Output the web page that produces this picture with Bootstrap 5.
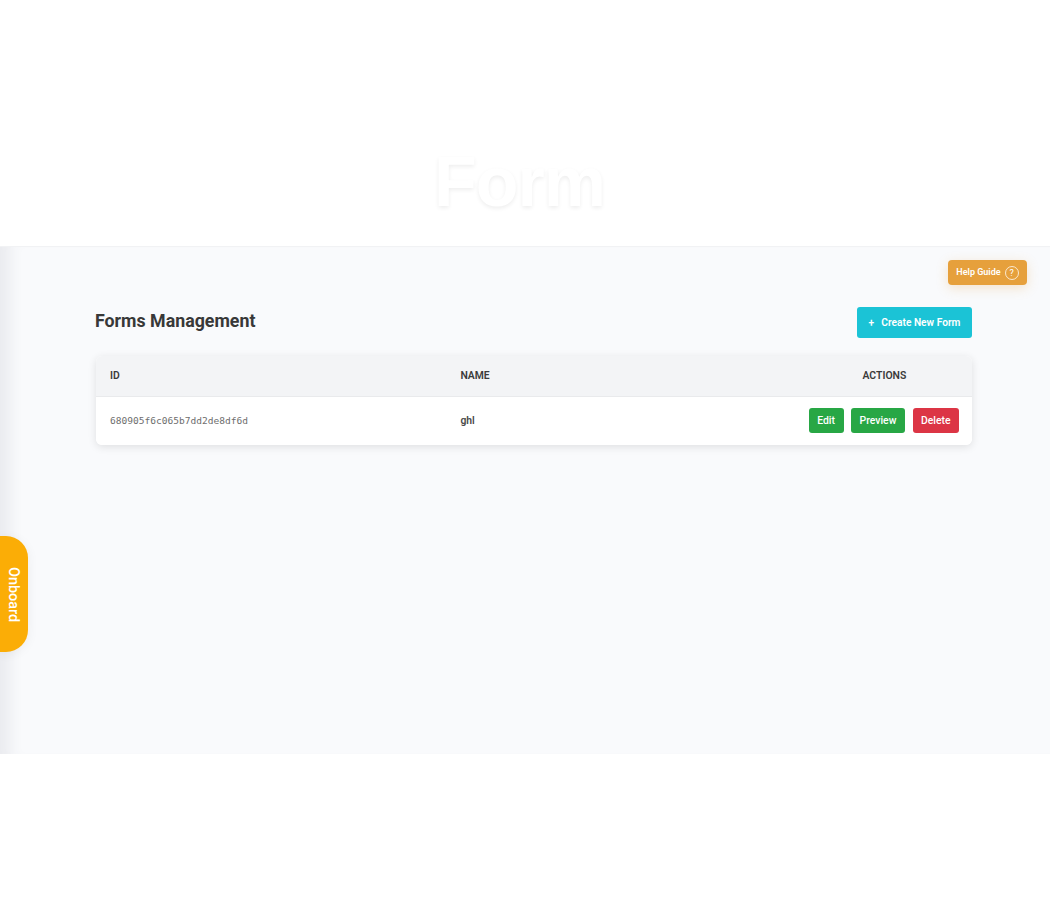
<!DOCTYPE html>
<html lang="en">
<head>
  <meta charset="UTF-8">
  <meta name="viewport" content="width=device-width, initial-scale=1.0">
  <title>Forms Management</title>
  <link href="https://cdn.jsdelivr.net/npm/bootstrap@5.3.3/dist/css/bootstrap.min.css" rel="stylesheet">
  <style>
    body { font-family: Roboto, "Liberation Sans", sans-serif; background: #fff; color: #333; height: 900px; overflow: hidden; position: relative; }
    .hero-area { height: 246px; padding: 142px 11px 0 0; }
    .hero-title { font-family: "Liberation Sans", Arial, sans-serif; font-weight: 700; font-size: 70px; line-height: 80px; color: #fff; margin: 0; text-shadow: 0 2px 4px rgba(0,0,0,.07); letter-spacing: -1px; }
    .forms-band { height: 508px; background: #f9fafc; border-top: 1px solid #f1f2f4; padding: 13px 23px 0 96px; box-shadow: inset 20px 0 14px -10px rgba(60,60,90,.08); }
    .help-btn { width: 79px; height: 25px; background: #e6a03c; color: #fff; font-size: 9px; font-weight: 600; border-radius: 4px; box-shadow: 0 3px 12px rgba(230,160,60,.25); border: 0; padding: 0; }
    .help-mark { width: 14px; height: 14px; border: 1px solid rgba(255,255,255,.75); border-radius: 50%; font-size: 9px; font-weight: 400; line-height: 12px; text-align: center; }
    .forms-wrap { width: 876px; margin-top: 22px; }
    .forms-title { font-size: 17.8px; font-weight: 700; color: #383838; margin: -3px 0 0 -1px; }
    .create-btn { width: 115px; height: 31px; background: #1bc3d6; color: #fff; font-size: 10.2px; font-weight: 600; border-radius: 3px; border: 0; padding: 0; }
    .create-btn:hover { background: #1bc3d6; color: #fff; }
    .forms-card { margin-top: 18px; border: 0; border-radius: 6px; overflow: hidden; box-shadow: 0 2px 8px rgba(0,0,0,.11); }
    .forms-table { margin: 0; table-layout: fixed; }
    .forms-table th { background: #f3f4f6; height: 40px; padding: 0 14px; font-size: 10.4px; font-weight: 600; color: #3a3a3a; vertical-align: middle; border-bottom: 1px solid #e9eaec; }
    .forms-table td { background: #fff; height: 49px; padding: 0 13px 0 14px; font-size: 10.4px; vertical-align: middle; border: 0; }
    .forms-table td.action-cell { padding-left: 0; }
    .id-cell { font-family: "DejaVu Sans Mono", "Liberation Mono", monospace; font-size: 9.55px !important; color: #6e6e6e !important; }
    .name-cell { font-weight: 600; color: #4a4a4a !important; }
    .row-actions { gap: 7.5px; }
    .row-btn { flex: none; height: 25px; padding: 0; font-size: 10.4px; font-weight: 500; color: #fff; border: 0; border-radius: 3px; }
    .btn-edit { width: 35px; background: #28a745; }
    .btn-preview { width: 54px; background: #28a745; }
    .btn-delete { width: 46.5px; background: #dc3545; }
    .onboard-tab { position: absolute; left: 0; top: 536px; width: 28px; height: 116px; padding-right: 2px; background: #fbad06; color: #fff; font-size: 14.4px; font-weight: 500; border-radius: 0 22px 22px 0; writing-mode: vertical-rl; box-shadow: 0 2px 12px rgba(0,0,0,.06); }
  </style>
</head>
<body>

  <!-- title -->
  <div class="hero-area text-center">
    <h1 class="hero-title">Form</h1>
  </div>

  <!-- main band -->
  <main class="forms-band">
    <div class="d-flex justify-content-end">
      <button type="button" class="btn help-btn d-flex align-items-center justify-content-center gap-1">Help Guide <span class="help-mark">?</span></button>
    </div>
    <div class="forms-wrap">
      <div class="d-flex justify-content-between align-items-center">
        <h2 class="forms-title">Forms Management</h2>
        <button type="button" class="btn create-btn">+ &nbsp;&thinsp;Create New Form</button>
      </div>
      <div class="card forms-card">
        <table class="table forms-table">
          <colgroup><col style="width:40%"><col style="width:40%"><col style="width:20%"></colgroup>
          <thead>
            <tr><th>ID</th><th>NAME</th><th class="text-center">ACTIONS</th></tr>
          </thead>
          <tbody>
            <tr>
              <td class="id-cell">680905f6c065b7dd2de8df6d</td>
              <td class="name-cell">ghl</td>
              <td class="action-cell">
                <div class="d-flex justify-content-end row-actions">
                  <button type="button" class="btn row-btn btn-edit">Edit</button>
                  <button type="button" class="btn row-btn btn-preview">Preview</button>
                  <button type="button" class="btn row-btn btn-delete">Delete</button>
                </div>
              </td>
            </tr>
          </tbody>
        </table>
      </div>
    </div>
  </main>

  <div class="onboard-tab d-flex align-items-center justify-content-center">Onboard</div>

  <script src="https://cdn.jsdelivr.net/npm/bootstrap@5.3.3/dist/js/bootstrap.bundle.min.js"></script>
</body>
</html>
